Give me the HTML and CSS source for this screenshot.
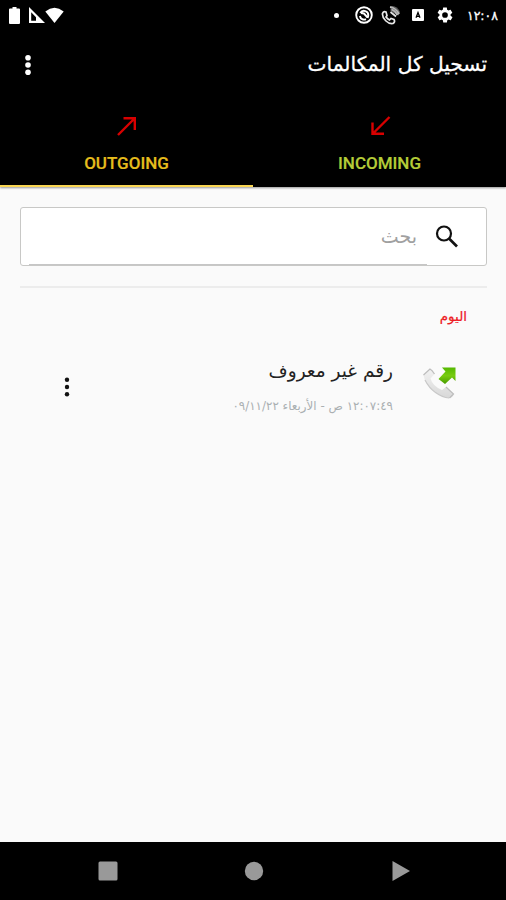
FILE: index.html
```html
<!DOCTYPE html>
<html lang="ar" dir="rtl">
<head>
    <meta charset="UTF-8">
    <meta name="viewport" content="width=device-width, initial-scale=1.0">
    <title>تسجيل كل المكالمات</title>
    <link rel="stylesheet" href="styles.css">
</head>
<body>
    <header>
        <div class="status-bar">
            <div class="status-group">
                <span class="clock">١٢:٠٨</span>
                <svg class="settings-icon" width="18" height="18" viewBox="0 0 24 24" fill="#fff"><path d="M19.4 13c0-.3.1-.6.1-1s0-.7-.1-1l2.1-1.600c.2-.2.3-.4.1-.7l-2-3.400c-.1-.2-.4-.3-.6-.2l-2.500 1c-.5-.4-1.100-.7-1.700-1L14.500 2.400c0-.2-.2-.4-.5-.4h-4c-.2 0-.5.2-.5.4l-.4 2.700c-.6.2-1.200.6-1.700 1l-2.500-1c-.2-.1-.5 0-.6.2l-2 3.400c-.1.3 0 .5.1.7L4.600 11a8 8 0 0 0 0 2l-2.100 1.600c-.2.2-.3.4-.1.7l2 3.400c.1.2.4.3.6.2l2.500-1c.5.4 1.100.7 1.700 1l.4 2.700c0 .2.2.4.5.4h4c.2 0 .5-.2.5-.4l.4-2.700c.6-.2 1.200-.6 1.700-1l2.500 1c.2.1.5 0 .6-.2l2-3.400c.1-.2.1-.5-.1-.7zM12 15.800a3.800 3.800 0 1 1 0-7.600 3.800 3.800 0 0 1 0 7.600z"/></svg>
                <svg width="14" height="14" viewBox="0 0 14 14"><rect x="1" y="1" width="12" height="12" rx="1" fill="#fff"/><path d="M5 9.800 7 4.500l2 5.300M5.800 8.300h2.400" fill="none" stroke="#000" stroke-width="1.300"/></svg>
                <svg class="call-icon" width="20" height="20" viewBox="0 0 20 20" fill="none" stroke="#e8e8e8" stroke-width="1.700"><path d="M1.500 8.500Q2.500 6 5 7L6 10.500 5 12Q6.500 14 8.500 15L10 13.500 13 14.500Q14.500 17 12 18.500C7 19.500 1 13.500 1.500 8.500z"/><path d="M9.500 7 15 11.500M10.500 4.500Q14 5.500 16.500 10M9 2Q15 3 18 9"/><path d="M9.500 1Q16 0 19 7L17.500 10.500 9.500 6.500z" fill="#999" stroke="none" opacity=".6"/></svg>
                <svg width="18" height="18" viewBox="0 0 18 18" fill="none" stroke="#fff"><circle cx="9" cy="9" r="7.800" stroke-width="1.900"/><path d="M5.300 7a4.300 4.300 0 0 1 8 2.500c0 1-.3 1.700-.8 2.300M11 13.200A4.300 4.300 0 0 1 4.900 10M6 7l3 .5 3.500 4" stroke-width="1.900"/></svg>
                <span class="dot"></span>
            </div>
            <div class="status-group">
                <svg width="19" height="17" viewBox="0 0 19 17"><path d="M.3 4.500Q9.500-2.800 18.700 4.500L9.500 16z" fill="#fff"/></svg>
                <svg width="17" height="17" viewBox="0 0 17 17"><path d="M1 0v16h16zM3.200 5.300 8 10.200v3.600H3.200z" fill="#fff" fill-rule="evenodd"/></svg>
                <svg class="battery-icon" width="11" height="17" viewBox="0 0 11 17"><path d="M3.500 0h4v1.500H10q1 0 1 1V16q0 1-1 1H1q-1 0-1-1V2.500q0-1 1-1h2.500z" fill="#fff"/></svg>
            </div>
        </div>
        <div class="toolbar">
            <h1>تسجيل كل المكالمات</h1>
            <svg width="8" height="22" viewBox="0 0 8 22" fill="#fff"><circle cx="4" cy="3.700" r="2.800"/><circle cx="4" cy="11" r="2.800"/><circle cx="4" cy="18.300" r="2.800"/></svg>
        </div>
        <nav class="tabs">
            <div class="tab incoming">
                <svg width="22" height="22" viewBox="0 0 22 22" fill="none" stroke="#d80000" stroke-width="2.400"><path d="M20.500 2 4 18.500M3.500 7.500v11.300H15"/></svg>
                <span>INCOMING</span>
            </div>
            <div class="tab outgoing active">
                <svg width="22" height="22" viewBox="0 0 22 22" fill="none" stroke="#d80000" stroke-width="2.400"><path d="M2 20 18.500 3.500M7.500 3.200h11.300V15"/></svg>
                <span>OUTGOING</span>
            </div>
        </nav>
    </header>
    <main>
        <div class="search">
            <svg width="24" height="24" viewBox="0 0 24 24" fill="none" stroke="#111"><circle cx="9" cy="8.500" r="7" stroke-width="2.200"/><path d="m14 13.500 8 8" stroke-width="2.700"/></svg>
            <div class="search-field"><span>بحث</span></div>
        </div>
        <h2>اليوم</h2>
        <div class="call">
            <svg class="call-type" width="36" height="36" viewBox="0 0 36 36">
                <defs>
                    <linearGradient id="arrow" x1="0" y1="0" x2="0" y2="1"><stop offset="0" stop-color="#54b800"/><stop offset=".5" stop-color="#78cc10"/><stop offset="1" stop-color="#489c00"/></linearGradient>
                    <linearGradient id="handset" x1="0" y1="0" x2="0" y2="1"><stop offset="0" stop-color="#f2f2f2"/><stop offset="1" stop-color="#d8d8d8"/></linearGradient>
                </defs>
                <path d="M1.500 10 8 4q2 1 4.500 5l-4 4.500q2 7.500 11.500 11.500l4-3 7.500 7q0 3-4 4Q21 33 12 26.500 3 19.500 1.500 10z" fill="url(#handset)"/>
                <path d="m1.500 10 6.500-6q2 1 4.500 5M24 22l7.500 7-4 4" fill="none" stroke="#bdbdbd" stroke-width="1.200"/>
                <path d="M3 15q4 8 10.500 12.500 7 5 13.500 5.500" fill="none" stroke="#c8c8c8" stroke-width="1.200"/>
                <path d="M20 2.500h13.500V16L30 12.500 23 19l-6.500-5 7-7.500z" fill="url(#arrow)"/>
            </svg>
            <div class="call-info">
                <div class="caller">رقم غير معروف</div>
                <div class="time">١٢:٠٧:٤٩ ص - الأربعاء ٠٩/١١/٢٢</div>
            </div>
            <svg class="call-menu" width="6" height="20" viewBox="0 0 6 20" fill="#111"><circle cx="3" cy="2.700" r="2.200"/><circle cx="3" cy="10" r="2.200"/><circle cx="3" cy="17.300" r="2.200"/></svg>
        </div>
    </main>
    <footer>
        <svg width="22" height="22" viewBox="0 0 22 22"><path d="M3.500 1v20l17.500-10z" fill="#999"/></svg>
        <svg width="20" height="20" viewBox="0 0 20 20"><circle cx="10" cy="10" r="9.200" fill="#999"/></svg>
        <svg width="20" height="20" viewBox="0 0 20 20"><rect x=".5" y=".5" width="19" height="19" rx="1.500" fill="#999"/></svg>
    </footer>
</body>
</html>
```
FILE: styles.css
```css
* {
    box-sizing: border-box;
}
body {
    display: flex;
    flex-direction: column;
    height: 900px;
    margin: 0;
    background-color: #fafafa;
    font-family: "DejaVu Sans", sans-serif;
    overflow: hidden;
}
svg {
    display: block;
    flex-shrink: 0;
}
header {
    height: 187px;
    background-color: #000;
    color: #fff;
    box-shadow: 0 1px 2px rgba(0, 0, 0, 0.4);
}
.status-bar {
    display: flex;
    justify-content: space-between;
    height: 30px;
    padding: 0 8px;
}
.status-group {
    display: flex;
    align-items: center;
}
.clock {
    width: 31px;
    margin-left: 13px;
    font-size: 12.5px;
    white-space: nowrap;
    -webkit-text-stroke: 0.3px #fff;
}
.settings-icon {
    margin-left: 11px;
}
.call-icon {
    margin: 0 10px 0 8px;
}
.dot {
    width: 5px;
    height: 5px;
    margin-right: 16px;
    border-radius: 50%;
    background-color: #fff;
}
.battery-icon {
    margin: 0 8px 0 1px;
}
.toolbar {
    display: flex;
    align-items: center;
    justify-content: space-between;
    height: 70px;
    padding: 0 19px 0 24px;
}
h1 {
    margin: 0;
    padding-bottom: 2px;
    font-size: 20.2px;
    font-weight: normal;
    line-height: 30px;
    white-space: nowrap;
    -webkit-text-stroke: 0.3px #fff;
}
.tabs {
    display: flex;
    height: 87px;
}
.tab {
    display: flex;
    flex: 1;
    flex-direction: column;
    align-items: center;
    padding-top: 15px;
    border-bottom: 2px solid transparent;
    font-family: Roboto, sans-serif;
    font-size: 17px;
    font-weight: 500;
    -webkit-text-stroke: 0.2px currentColor;
}
.tab span {
    margin-top: 16px;
    line-height: 20px;
}
.incoming {
    color: #b5cc38;
}
.outgoing {
    color: #e6bd1d;
}
.active {
    border-bottom-color: #f8d552;
}
main {
    flex: 1;
    padding: 20px 19px 0 20px;
}
.search {
    display: flex;
    align-items: center;
    height: 59px;
    padding: 0 27px 0 8px;
    border: 1px solid #c8c8c6;
    border-radius: 3px;
    background-color: #fff;
}
.search-field {
    display: flex;
    flex: 1;
    align-items: center;
    align-self: stretch;
    margin-right: 8px;
    padding-right: 10px;
    border-bottom: 1px solid #c6c6c6;
    color: #a0a0a0;
    font-size: 19px;
}
h2 {
    height: 57px;
    margin: 20px 0 0;
    padding: 17px 20px 0 0;
    border-top: 2px solid #ececec;
    color: #ed1c24;
    font-size: 13.5px;
    font-weight: normal;
    line-height: 22px;
    -webkit-text-stroke: 0.2px #ed1c24;
}
.call {
    display: flex;
    padding: 0 29px 0 44px;
}
.call-type {
    margin-top: 22px;
}
.call-info {
    flex: 1;
    margin-right: 29px;
    white-space: nowrap;
}
.caller {
    margin-top: 13px;
    color: #222;
    font-size: 18.5px;
    line-height: 30px;
}
.time {
    margin-top: 9px;
    color: #aab0b2;
    font-size: 11.9px;
    line-height: 22px;
}
.call-menu {
    margin-top: 34px;
}
footer {
    display: flex;
    align-items: center;
    justify-content: space-between;
    height: 58px;
    padding: 0 95px 0 98px;
    background-color: #000;
}
```
